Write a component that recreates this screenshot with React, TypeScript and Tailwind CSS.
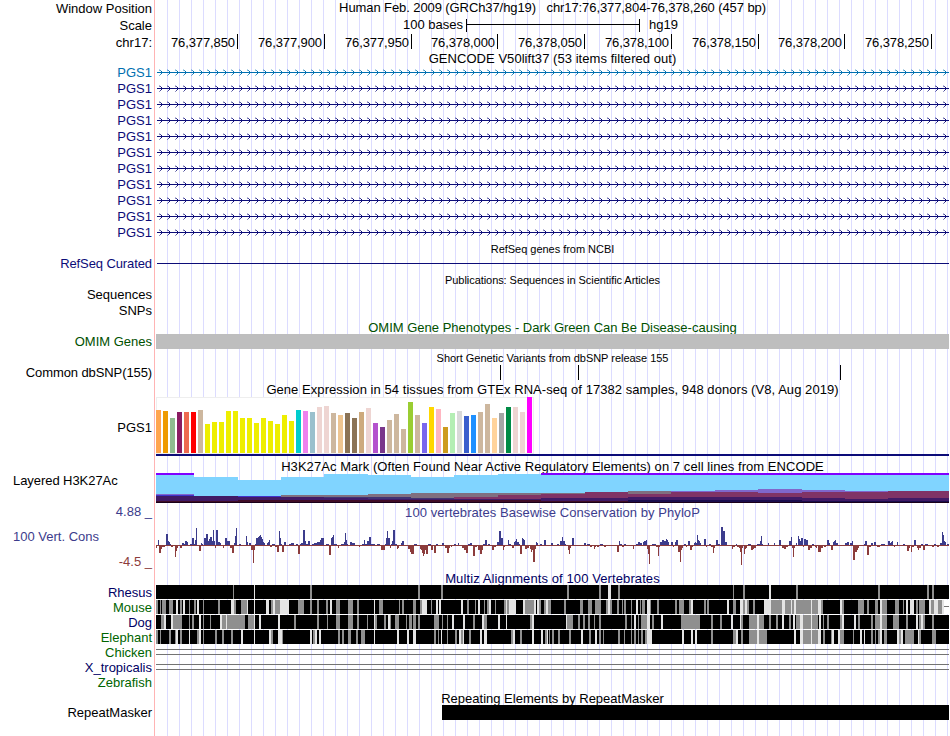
import React from "react";
import { clsx } from "clsx";

const TRACK_START = 156;

interface TrackRowProps {
  label?: React.ReactNode;
  height: string;
  labelClass?: string;
  children?: React.ReactNode;
}

const TrackRow: React.FC<TrackRowProps> = ({
  label,
  height,
  labelClass,
  children,
}) => (
  <div className={clsx("flex", height)}>
    <div
      className={clsx(
        "flex w-[156px] shrink-0 items-center justify-end pr-[4px] whitespace-nowrap",
        labelClass
      )}
    >
      {label}
    </div>
    <div className="min-w-0 flex-1">{children}</div>
  </div>
);

interface TitleProps {
  height: string;
  className?: string;
  children: React.ReactNode;
}

const Title: React.FC<TitleProps> = ({ height, className, children }) => (
  <TrackRow height={height}>
    <div
      className={clsx(
        "flex h-full items-center justify-center whitespace-pre",
        className
      )}
    >
      {children}
    </div>
  </TrackRow>
);

interface CanvasProps {
  height: number;
  children: React.ReactNode;
}

// Drawing area in browser pixel coordinates on x, local on y
const Canvas: React.FC<CanvasProps> = ({ height, children }) => (
  <svg
    className="block"
    width={793}
    height={height}
    viewBox={`${TRACK_START} 0 793 ${height}`}
    shapeRendering="crispEdges"
  >
    {children}
  </svg>
);

const TICKS = [
  { text: "76,377,850", width: "w-[82px]" },
  { text: "76,377,900", width: "w-[87px]" },
  { text: "76,377,950", width: "w-[87px]" },
  { text: "76,378,000", width: "w-[86px]" },
  { text: "76,378,050", width: "w-[87px]" },
  { text: "76,378,100", width: "w-[87px]" },
  { text: "76,378,150", width: "w-[87px]" },
  { text: "76,378,200", width: "w-[86px]" },
  { text: "76,378,250", width: "w-[87px]" },
];

const GeneLine: React.FC<{ color: string }> = ({ color }) => (
  <Canvas height={16}>
    <rect x={157} y={7} width={792} height={1} fill={color} />
    {Array.from({ length: 99 }, (_, i) => 159 + i * 8).map((x) => (
      <g key={x} fill={color}>
        <rect x={x} y={5} width={1} height={1} opacity={0.45} />
        <rect x={x + 1} y={5} width={1} height={1} opacity={0.75} />
        <rect x={x + 2} y={6} width={1} height={1} />
        <rect x={x + 2} y={8} width={1} height={1} />
        <rect x={x + 1} y={9} width={1} height={1} opacity={0.75} />
        <rect x={x} y={10} width={1} height={1} opacity={0.45} />
        <rect x={x} y={4} width={1} height={1} opacity={0.3} />
      </g>
    ))}
  </Canvas>
);

// [color, height]
const TISSUES: [string, number][] = [
  ["#ffa54f", 43], ["#ee9a00", 42], ["#8fbc8f", 35], ["#8b1c62", 41],
  ["#ee6a50", 41], ["#ff0000", 41], ["#cdb79e", 43], ["#eeee00", 29],
  ["#eeee00", 31], ["#eeee00", 31], ["#eeee00", 42], ["#eeee00", 42],
  ["#eeee00", 35], ["#eeee00", 35], ["#eeee00", 30], ["#eeee00", 35],
  ["#eeee00", 32], ["#eeee00", 29], ["#eeee00", 38], ["#eeee00", 32],
  ["#00cdcd", 43], ["#ee82ee", 42], ["#9ac0cd", 41], ["#eed5d2", 46],
  ["#eed5d2", 47], ["#cdb79e", 40], ["#eec591", 38], ["#8b7355", 40],
  ["#8b7355", 35], ["#cdaa7d", 41], ["#eed5d2", 45], ["#b452cd", 30],
  ["#7a378b", 26], ["#cdb79e", 33], ["#cdb79e", 39], ["#cdb79e", 24],
  ["#9acd32", 51], ["#cdb79e", 38], ["#7a67ee", 30], ["#ffd700", 46],
  ["#ffb6c1", 44], ["#cd9b1d", 26], ["#b4eeb4", 40], ["#d9d9d9", 42],
  ["#3a5fcd", 37], ["#1e90ff", 38], ["#cdb79e", 41], ["#cdb79e", 49],
  ["#ffd39b", 35], ["#a6a6a6", 40], ["#008b45", 46], ["#eed5d2", 46],
  ["#eed5d2", 41], ["#ff00ff", 56],
];

const SKY = "#80d4ff";
const VIOLET = "#8000ff";
const LILAC = "#8066cc";
const GRAY = "#806f80";
const WINE = "#803366";
const INDIGO = "#401a66";
const SLATE = "#403373";
const BLUE = "#4033cc";
const MAROON = "#400d26";
const NAVY = "#1a0d4d";
const INK = "#1a0019";

// x, end, then stacked [top, color] layers, each reaching to the bottom
const H3K27AC: [number, number, [number, string][]][] = [
  [156, 194, [[0, VIOLET], [2, SKY], [21, LILAC], [22, BLUE], [23, INDIGO], [28, MAROON], [29, INK]]],
  [194, 238, [[4, SKY], [23, INDIGO], [28, MAROON], [29, INK]]],
  [238, 281, [[7, SKY], [23, BLUE], [24, INDIGO], [27, MAROON], [29, INK]]],
  [281, 324, [[4, SKY], [22, GRAY], [24, INDIGO], [27, MAROON], [29, INK]]],
  [324, 368, [[1, SKY], [22, GRAY], [24, SLATE], [25, INDIGO], [27, MAROON], [29, INK]]],
  [368, 411, [[2, SKY], [21, GRAY], [24, SLATE], [26, INDIGO], [27, MAROON], [29, INK]]],
  [411, 454, [[4, SKY], [20, GRAY], [25, SLATE], [26, INDIGO], [27, MAROON], [29, INK]]],
  [454, 498, [[2, SKY], [20, GRAY], [24, WINE], [26, INDIGO], [27, MAROON], [29, INK]]],
  [498, 541, [[1, SKY], [20, GRAY], [22, WINE], [26, INDIGO], [27, MAROON], [29, INK]]],
  [541, 585, [[0, VIOLET], [2, SKY], [20, GRAY], [21, WINE], [25, INDIGO], [28, MAROON], [29, INK]]],
  [585, 628, [[0, VIOLET], [2, SKY], [19, WINE], [25, INDIGO], [28, MAROON], [29, INK]]],
  [628, 671, [[0, VIOLET], [2, SKY], [18, GRAY], [21, WINE], [24, INDIGO], [27, NAVY], [29, INK]]],
  [671, 715, [[0, VIOLET], [2, SKY], [18, LILAC], [19, WINE], [24, INDIGO], [27, NAVY], [29, INK]]],
  [715, 758, [[0, VIOLET], [2, SKY], [17, LILAC], [19, WINE], [24, INDIGO], [27, NAVY], [29, INK]]],
  [758, 802, [[0, VIOLET], [2, SKY], [16, LILAC], [20, WINE], [24, INDIGO], [27, NAVY], [29, INK]]],
  [802, 845, [[0, VIOLET], [2, SKY], [17, LILAC], [19, WINE], [25, INDIGO], [28, NAVY], [29, INK]]],
  [845, 888, [[0, VIOLET], [2, SKY], [18, LILAC], [19, WINE], [26, INDIGO], [28, NAVY], [29, INK]]],
  [888, 949, [[0, VIOLET], [2, SKY], [18, WINE], [25, INDIGO], [28, NAVY], [29, INK]]],
];

// x:width:score
const PHYLOP =
  "156:1:-3 157:1:-1 158:1:5 159:2:-8 161:1:-4 162:3:-2 165:1:-1 166:2:11 168:1:4 169:1:3 170:1:1 171:2:-2 173:2:-1 175:1:-12 176:1:-6 177:1:-3 178:2:-1 180:2:-3 182:2:2 184:1:1 185:2:4 187:1:3 188:2:-1 190:2:1 192:2:7 194:1:1 195:1:5 196:1:17 197:2:-1 199:2:-6 201:1:2 202:1:1 204:2:7 206:2:11 208:1:4 209:1:6 210:2:8 212:1:4 213:1:15 214:1:4 215:1:-3 216:2:15 218:2:3 220:1:2 221:2:-1 223:1:-3 224:1:-1 225:2:7 227:3:4 230:2:-3 232:2:-8 234:1:2 235:1:9 236:1:17 237:2:-1 239:2:1 241:5:-1 246:1:9 247:1:3 248:1:-1 249:2:2 251:2:-5 253:1:-18 254:1:-5 255:1:1 256:2:7 258:1:8 259:1:9 260:1:10 261:1:8 262:1:6 263:1:3 264:1:2 265:2:-1 267:1:2 268:1:3 269:1:5 270:2:-2 272:2:1 274:1:1 275:2:-2 277:2:-7 279:1:14 280:1:7 281:1:1 282:2:-7 284:2:3 286:3:-1 289:2:1 291:3:2 294:2:-1 296:2:1 298:2:-9 300:1:1 301:2:2 303:2:15 305:1:4 306:2:1 308:2:4 310:2:-1 312:2:1 314:3:2 317:1:3 318:2:3 320:1:5 321:3:7 324:2:-1 326:3:1 329:2:-10 331:1:7 332:1:8 333:1:10 334:3:1 338:1:-3 339:2:-1 341:3:1 344:1:3 345:1:12 346:1:5 347:1:1 348:2:-1 350:2:3 352:3:2 355:3:-1 359:1:-2 360:2:-1 362:2:1 364:1:5 365:2:1 367:2:4 369:2:8 371:2:1 373:2:1 375:2:-1 377:3:1 381:4:-5 385:1:1 386:1:7 387:1:14 388:2:7 390:1:-3 391:1:1 392:1:4 393:2:15 395:2:1 397:1:-4 398:1:-3 399:2:-1 401:1:2 " +
  "402:2:4 406:2:-1 408:2:-4 410:1:-7 411:3:-9 414:3:1 418:1:-1 420:1:-4 421:1:-5 422:1:-8 423:1:-11 424:1:-9 425:1:-5 426:2:-9 428:3:1 431:2:-5 434:2:-8 436:2:1 439:2:-1 442:2:2 445:2:-3 447:2:-8 449:1:-3 451:1:-2 454:2:1 458:1:2 460:2:-1 462:2:-3 464:2:-5 466:2:-8 468:2:1 470:2:2 473:2:-11 475:2:-2 478:2:-5 480:2:-9 482:1:-5 483:2:1 485:2:5 488:2:1 492:2:-5 494:2:-2 497:2:3 499:2:14 501:2:7 503:1:-5 504:1:-2 508:1:5 509:2:1 512:2:-3 514:1:3 515:1:4 516:1:6 517:2:3 519:1:1 520:2:-9 522:1:7 523:1:6 524:1:5 525:2:-4 527:2:-3 530:1:-4 531:1:-7 532:1:-5 533:2:-17 535:1:-4 536:1:3 537:1:2 540:2:1 544:2:5 547:2:-1 551:2:2 554:2:-1 557:2:1 560:2:4 562:1:8 563:2:4 565:1:1 566:2:-1 568:1:-5 569:1:-9 570:1:-3 572:2:7 575:9:-1 584:2:2 587:3:1 590:2:-2 594:1:-4 595:1:-2 597:2:-2 600:3:1 604:2:-2 608:2:-1 612:4:-1 617:2:-7 619:1:4 620:2:1 622:2:-2 624:2:1 628:4:-1 633:1:-4 636:2:1 638:2:3 640:2:2 643:1:3 644:2:4 646:1:5 647:2:-4 648:1:-9 649:1:-19 650:2:-1 652:2:1 654:2:1 656:2:-2 658:1:-11 659:1:-2 " +
  "660:2:3 662:2:5 664:2:4 666:1:6 667:1:5 668:1:3 669:1:-1 671:2:3 673:1:-2 674:1:-1 675:1:3 676:2:5 678:2:-7 680:1:-17 681:1:-5 682:1:-3 684:2:1 686:1:-2 688:2:4 690:2:-5 692:1:-2 694:1:2 695:1:3 696:1:2 697:1:10 698:1:5 699:1:4 700:1:2 702:2:-1 704:2:6 706:1:-2 709:2:1 711:2:-2 713:1:-8 714:1:-3 716:2:5 718:2:1 721:1:18 722:1:18 723:2:14 725:2:3 727:3:-1 732:1:-4 733:2:-2 736:1:1 737:2:-2 739:1:-3 740:1:-7 741:1:-20 742:1:-3 744:1:-9 745:1:-4 746:1:-3 748:3:1 751:2:-5 753:1:-4 754:2:-3 757:3:1 760:1:4 761:1:9 762:1:1 764:4:-1 768:1:2 771:2:-1 774:1:2 775:2:-1 779:2:5 782:2:-3 784:2:-4 786:2:-2 789:2:4 791:1:8 792:1:-3 793:1:-12 794:1:-3 796:1:2 798:1:9 799:1:6 800:1:4 801:2:7 803:1:-2 804:2:6 806:2:5 808:2:-5 810:2:-3 812:2:1 815:1:-2 816:1:-3 818:3:-7 821:2:-3 824:2:-2 827:2:5 829:1:2 831:2:-5 833:1:3 834:1:4 835:1:5 836:2:2 839:3:-1 843:3:-1 845:2:2 847:2:3 850:2:2 852:1:4 853:2:-15 855:2:-7 857:1:-5 858:1:-3 860:3:-1 864:1:1 865:2:4 867:2:-10 869:2:-2 871:2:2 874:2:3 877:3:-2 881:4:1 886:3:-1 888:2:4 890:1:2 891:1:3 892:1:4 894:1:-2 897:1:3 899:3:-1 903:2:1 907:2:-6 909:1:-3 911:1:-7 912:2:-2 914:2:5 917:1:-3 918:1:-5 919:2:-3 921:2:1 923:2:-5 925:3:1 929:3:-1 932:2:-2 934:2:1 937:2:-2 940:2:2 942:1:13 943:1:10 944:1:4 945:1:3 947:2:1";

const Conservation: React.FC = () => (
  <Canvas height={52}>
    <rect x={156} y={25} width={793} height={1} fill="#8c3c3c" />
    {PHYLOP.split(" ").map((entry, i) => {
      const [x, w, score] = entry.split(":").map(Number);
      return (
        <rect
          key={i}
          x={x}
          y={score > 0 ? 25 - score : 25}
          width={w}
          height={Math.abs(score)}
          fill={score > 0 ? "#3c3c8c" : "#8c3c3c"}
        />
      );
    })}
  </Canvas>
);

// Runs of lower identity: start, shade (g = gray, l = light), width
const ALIGNMENTS = [
  {
    name: "Rhesus",
    color: "text-[#000064]",
    runs: "233g1 254l1 310g2 418g2 441g2 567g2 599g2 608l3 618g2 733g1 743g2 769l2 796g2 878g2 927g2 932g2",
  },
  {
    name: "Mouse",
    color: "text-[#006400]",
    runs:
      "156g2 160g1 162g4 169g4 176l2 180g2 183l2 189g1 194g2 197l2 203g1 218g2 231l3 234g2 241g6 247l1 254l1 266l3 271g2 273l2 275g5 280l9 298g6 310g2 317g2 326g2 330l2 336g4 348g5 357g2 374l1 379g4 399g1 402g2 413g3 " +
      "420g2 422l5 431g1 436l2 439l2 461l2 467g2 475g1 478l2 484g1 487g2 489l2 495g1 504g2 506l1 507g2 509l7 523l2 525g9 534l2 537l2 539g2 544g2 546l2 548g3 564g2 580g3 588g4 595g6 606g2 608l2 610g2 617g2 622g1 624g2 631g1 636l2 640g1 642g3 647l3 650g1 657g2 " +
      "675g2 679g5 689g2 691l2 704g2 707g2 727l2 733g3 740l3 743g2 745l2 747g2 753g2 764l7 771g11 782l3 785g6 791l1 792g2 794l2 796g15 811l1 812g6 818l3 821g2 840l2 842g2 858g6 867g2 875g3 880l2 882g5 895g4 903g1 906l2 910l4 916g2 919g6 929l2 931g3 934l4 938g4 942l2",
  },
  {
    name: "Dog",
    color: "text-[#000064]",
    runs:
      "161g3 164l2 171l2 173g9 189g1 192g2 199l2 203g1 210g1 220l2 222g4 226l1 227g18 248g6 254l1 259l2 278l2 294g2 317g2 327g1 336g4 348g5 357g2 367g1 374l1 375g2 384g2 388l2 390g1 395g4 406g1 409g2 413g2 415l1 " +
      "411g1 414g2 418g2 434g5 442g1 447g1 452l2 463l2 473g2 482l2 484g3 498l2 506l1 530g2 532l2 566l1 567g6 578g2 583g2 588g2 594g1 599g2 625g2 631g1 634l2 638g1 641g6 647l3 652g2 661l2 " +
      "681g19 711g2 720g2 731l2 740l1 741g2 749g8 757l2 759g5 769g2 776g2 782l2 789g2 793l2 796g4 800l3 803g8 811l1 812g6 819l2 823g1 827g2 840g2 842l2 854l2 858g2 871g2 875g5 880l2 882g5 893g6 906g2 916l2 919g2 921l2 923g2 932g2",
  },
  {
    name: "Elephant",
    color: "text-[#006400]",
    runs:
      "156g2 160g1 169g2 175g1 176l2 180g2 189l1 197g2 199l2 203g1 215g2 222g2 231g2 241l2 254l1 269l2 271g2 278l4 282g1 310l2 313g2 315l2 319l2 338g2 342g2 348g3 356g2 361g4 374l1 397l2 407l2 413l3 " +
      "434g2 438g1 441l1 447g1 455g2 459l2 461g2 463l1 469g2 480l2 484l3 511g2 513l2 520g2 532l2 541l2 545g2 547l1 549g1 552g2 558g2 569g2 581l2 589g2 595l2 599g2 603g1 618g2 624g1 631g1 634g2 638g1 641g2 645g2 647l5 " +
      "682l2 691l2 695l2 711g2 733g3 736l2 741g2 749g8 757l2 759g8 794l2 800l3 803g8 811l1 812g6 818l3 823g2 831g1 832l2 838l2 840g4 853g1 860l2 864l1 871g2 875g1 878g2 880l2 884g3 897l2 899g2 901l2 905g9 918l1 919g2 932g4",
  },
];

const AlignmentRow: React.FC<{ runs: string; gapTail?: boolean }> = ({
  runs,
  gapTail,
}) => (
  <Canvas height={14}>
    <rect x={156} y={0} width={gapTail ? 788 : 793} height={14} fill="#000" />
    {runs.split(" ").map((run, i) => {
      const [x, w] = run.split(/[gl]/).map(Number);
      return (
        <rect
          key={i}
          x={x}
          y={0}
          width={w}
          height={14}
          fill={run.includes("g") ? "#8f8f8f" : "#e4e4e4"}
        />
      );
    })}
    {gapTail && (
      <>
        <rect x={944} y={0} width={5} height={14} fill="#fff" />
        <rect x={944} y={6} width={5} height={1} fill="#737373" />
      </>
    )}
  </Canvas>
);

const DoubleLine: React.FC = () => (
  <Canvas height={15}>
    <rect x={156} y={4} width={793} height={1} fill="#737373" />
    <rect x={156} y={9} width={793} height={1} fill="#737373" />
  </Canvas>
);

export default function App() {
  return (
    <div className="relative h-[736px] w-[950px] overflow-hidden bg-white font-['Liberation_Sans',Arial,sans-serif] text-[13px] leading-[15px] text-black">
      <div className="absolute inset-y-0 left-[154px] w-px bg-[#ffb4b4]" />
      <div className="absolute inset-y-0 left-[156px] w-[793px] bg-[repeating-linear-gradient(to_right,transparent_0px,transparent_11px,#dcdcff_11px,#dcdcff_12px)]" />

      <div className="relative flex w-[949px] flex-col">
        <TrackRow label="Window Position" height="h-[17px]">
          <div className="flex h-[15px] items-center justify-center tracking-[-0.09px] whitespace-pre">
            Human Feb. 2009 (GRCh37/hg19){"   "}chr17:76,377,804-76,378,260 (457 bp)
          </div>
        </TrackRow>
        <TrackRow label="Scale" height="h-[17px]">
          <div className="flex h-[15px] items-center">
            <span className="w-[307px] text-right">100 bases</span>
            <svg className="ml-[3px] block" width="174" height="15" shapeRendering="crispEdges">
              <path d="M0 2h1v13H0zM173 2h1v13h-1zM0 7h174v1H0z" fill="#000" />
            </svg>
            <span className="ml-[9px]">hg19</span>
          </div>
        </TrackRow>
        <TrackRow label="chr17:" height="h-[18px]" labelClass="pb-px">
          <div className="flex">
            {TICKS.map((tick) => (
              <div
                key={tick.text}
                className={clsx(
                  "flex h-[15px] items-center justify-end border-r border-black pt-[2px] pr-[2px] tracking-[-0.1px]",
                  tick.width
                )}
              >
                {tick.text}
              </div>
            ))}
          </div>
        </TrackRow>
        <Title height="h-[13px]" className="tracking-[0.05px]">
          GENCODE V50lift37 (53 items filtered out)
        </Title>
        {Array.from({ length: 11 }, (_, i) => (
          <TrackRow
            key={i}
            label="PGS1"
            height="h-[16px]"
            labelClass={clsx("pb-px", i === 0 ? "text-[#0070b0]" : "text-[#0c0c78]")}
          >
            <GeneLine color={i === 0 ? "#0070b0" : "#0c0c78"} />
          </TrackRow>
        ))}

        <Title height="h-[15px]" className="pt-[2px] text-[11px] tracking-[-0.03px]">
          RefSeq genes from NCBI
        </Title>
        <TrackRow
          label="RefSeq Curated"
          height="h-[16px]"
          labelClass="pb-px tracking-[-0.1px] text-[#0c0c78]"
        >
          <Canvas height={16}>
            <rect x={157} y={7} width={792} height={1} fill="#0c0c78" />
          </Canvas>
        </TrackRow>

        <Title height="h-[15px]" className="pt-[2px] text-[11px] tracking-[-0.06px]">
          Publications: Sequences in Scientific Articles
        </Title>
        <TrackRow label="Sequences" height="h-[16px]" labelClass="pb-px" />
        <TrackRow label="SNPs" height="h-[16px]" labelClass="pb-px" />

        <Title height="h-[15px]" className="pt-[2px] text-[#005000]">
          OMIM Gene Phenotypes - Dark Green Can Be Disease-causing
        </Title>
        <TrackRow label="OMIM Genes" height="h-[16px]" labelClass="pb-px text-[#005000]">
          <div className="h-[15px] bg-[#bebebe]" />
        </TrackRow>

        <Title height="h-[15px]" className="pt-[2px] text-[11px] tracking-[-0.03px]">
          Short Genetic Variants from dbSNP release 155
        </Title>
        <TrackRow
          label="Common dbSNP(155)"
          height="h-[16px]"
          labelClass="pb-px tracking-[-0.1px]"
        >
          <Canvas height={16}>
            {[500, 578, 840].map((x) => (
              <rect key={x} x={x} y={0} width={1} height={15} fill="#000" />
            ))}
          </Canvas>
        </TrackRow>

        <Title height="h-[16px]" className="tracking-[0.055px]">
          Gene Expression in 54 tissues from GTEx RNA-seq of 17382 samples, 948 donors (V8, Aug 2019)
        </Title>
        <TrackRow label="PGS1" height="h-[61px]">
          <Canvas height={61}>
            <rect x={156} y={0} width={378} height={57} fill="#eeeeee" />
            <rect x={157} y={1} width={376} height={55} fill="#fff" />
            {TISSUES.map(([color, h], i) => (
              <rect key={i} x={156 + i * 7} y={56 - h} width={5} height={h} fill={color} />
            ))}
            <rect x={156} y={57} width={793} height={2} fill="#0c0c78" />
          </Canvas>
        </TrackRow>

        <Title height="h-[15px]" className="pt-[2px] tracking-[0.06px]">
          H3K27Ac Mark (Often Found Near Active Regulatory Elements) on 7 cell lines from ENCODE
        </Title>
        <TrackRow
          label={
            <span className="-mt-[15px] w-full pl-[13px] text-left tracking-[-0.06px]">
              Layered H3K27Ac
            </span>
          }
          height="h-[30px]"
        >
          <Canvas height={30}>
            {H3K27AC.map(([start, end, layers]) =>
              layers.map(([top, color]) => (
                <rect
                  key={`${start}-${top}`}
                  x={start}
                  y={top}
                  width={end - start}
                  height={30 - top}
                  fill={color}
                />
              ))
            )}
          </Canvas>
        </TrackRow>

        <TrackRow label="4.88 _" height="h-[17px]" labelClass="text-[#3c3c8c]">
          <div className="flex h-full items-center justify-center pt-[2px] tracking-[0.06px] text-[#3c3c8c]">
            100 vertebrates Basewise Conservation by PhyloP
          </div>
        </TrackRow>
        <TrackRow
          label={
            <div className="flex h-full w-full flex-col pl-[13px] text-[#3c3c8c]">
              <span className="mt-[9px]">100 Vert. Cons</span>
              <span className="mt-[10px] text-right text-[#8c3c3c]">-4.5 _</span>
            </div>
          }
          height="h-[52px]"
        >
          <Conservation />
        </TrackRow>

        <Title height="h-[13px]" className="tracking-[0.1px] text-[#000064]">
          Multiz Alignments of 100 Vertebrates
        </Title>
        {ALIGNMENTS.map((row) => (
          <TrackRow key={row.name} label={row.name} height="h-[15px]" labelClass={row.color}>
            <AlignmentRow runs={row.runs} gapTail={row.name === "Mouse"} />
          </TrackRow>
        ))}
        <TrackRow label="Chicken" height="h-[15px]" labelClass="text-[#006400]">
          <DoubleLine />
        </TrackRow>
        <TrackRow label="X_tropicalis" height="h-[15px]" labelClass="text-[#000064]">
          <DoubleLine />
        </TrackRow>
        <TrackRow label="Zebrafish" height="h-[15px]" labelClass="text-[#006400]" />

        <Title height="h-[15px]" className="pt-[2px]">
          Repeating Elements by RepeatMasker
        </Title>
        <TrackRow label="RepeatMasker" height="h-[15px]">
          <div className="ml-[286px] h-[15px] bg-black" />
        </TrackRow>
      </div>
    </div>
  );
}
